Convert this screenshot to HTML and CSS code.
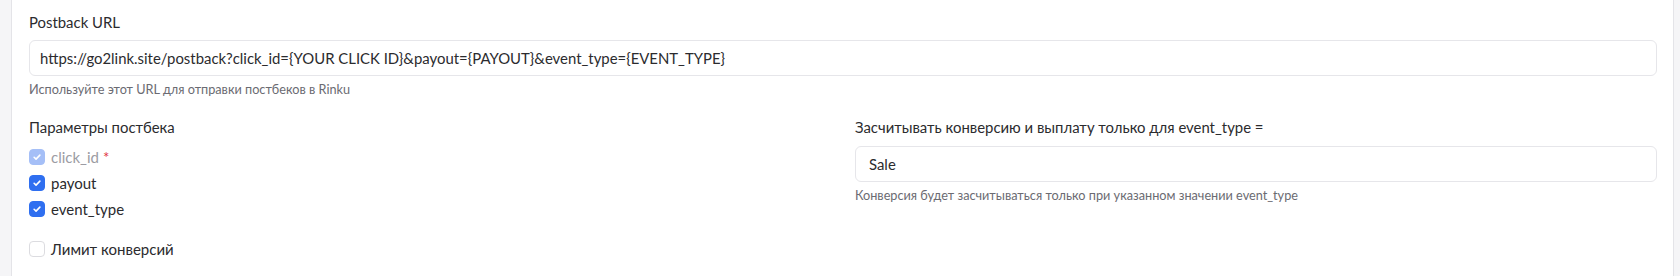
FILE: index.html
```html
<!DOCTYPE html>
<html lang="ru">
<head>
<meta charset="utf-8">
<link rel="stylesheet" href="styles.css">
</head>
<body>
<div class="page">
  <div class="card">
    <div class="field">
      <label class="label">Postback URL</label>
      <div class="input">https://go2link.site/postback?click_id={YOUR CLICK ID}&amp;payout={PAYOUT}&amp;event_type={EVENT_TYPE}</div>
      <div class="help">Используйте этот URL для отправки постбеков в Rinku</div>
    </div>
    <div class="cols">
      <div class="col">
        <div class="label">Параметры постбека</div>
        <div class="checks">
          <div class="check disabled"><span class="box on"><svg viewBox="0 0 16 16"><path d="M4.7 8.3l2.2 2.1 4.4-4.5" /></svg></span><span class="ctext">click_id</span><span class="req">*</span></div>
          <div class="check"><span class="box on"><svg viewBox="0 0 16 16"><path d="M4.7 8.3l2.2 2.1 4.4-4.5" /></svg></span><span class="ctext">payout</span></div>
          <div class="check"><span class="box on"><svg viewBox="0 0 16 16"><path d="M4.7 8.3l2.2 2.1 4.4-4.5" /></svg></span><span class="ctext">event_type</span></div>
        </div>
        <div class="check limit"><span class="box"></span><span class="ctext">Лимит конверсий</span></div>
      </div>
      <div class="col">
        <div class="label">Засчитывать конверсию и выплату только для event_type =</div>
        <div class="input">Sale</div>
        <div class="help">Конверсия будет засчитываться только при указанном значении event_type</div>
      </div>
    </div>
  </div>
</div>
</body>
</html>
```
FILE: styles.css
```css
html, body {
  margin: 0;
  padding: 0;
  background: #f5f5f7;
}
body {
  font-family: Lato, "Open Sans", sans-serif;
  color: #2b2b2e;
  width: 1680px;
  height: 276px;
  overflow: hidden;
}
.page {
  padding: 0 6px 0 11px;
  height: 276px;
}
.card {
  background: #fff;
  border-left: 1px solid #e4e4e8;
  border-right: 1px solid #e4e4e8;
  height: 276px;
  box-sizing: border-box;
  padding: 13px 16px 0 17px;
}
.label {
  display: block;
  font-size: 14.9px;
  line-height: 19px;
  color: #2b2b2e;
}
.field .input {
  margin-top: 8px;
}
.input {
  height: 36px;
  box-sizing: border-box;
  border: 1px solid #e6e6ea;
  border-radius: 6px;
  padding: 0 10px;
  font-size: 14.9px;
  line-height: 34px;
  color: #2b2b2e;
  white-space: nowrap;
}
.help {
  font-size: 12.7px;
  color: #6b6b72;
  margin-top: 6px;
  line-height: 15px;
}
.cols {
  display: grid;
  grid-template-columns: 1fr 1fr;
  column-gap: 24px;
  margin-top: 19px;
}
.col .label {
  margin-top: 2px;
}
.col .input {
  margin-top: 9px;
  padding-left: 13px;
}
.checks {
  margin-top: 12px;
  display: flex;
  flex-direction: column;
  gap: 10px;
}
.check {
  display: flex;
  align-items: center;
  gap: 6px;
  font-size: 15px;
  line-height: 16px;
  color: #2b2b2e;
}
.box {
  width: 16px;
  height: 16px;
  box-sizing: border-box;
  border: 1px solid #dcdce0;
  border-radius: 4px;
  background: #fff;
  display: inline-flex;
  align-items: center;
  justify-content: center;
  flex: none;
}
.box.on {
  background: #2f6ff0;
  border-color: #2f6ff0;
}
.box svg {
  width: 14px;
  height: 14px;
  fill: none;
  stroke: #fff;
  stroke-width: 1.8;
  stroke-linecap: round;
  stroke-linejoin: round;
}
.check.disabled .box.on {
  background: #a5bff7;
  border-color: #a5bff7;
}
.check.disabled .ctext {
  color: #9c9ca3;
}
.req {
  color: #e0343f;
  margin-left: -2px;
}
.limit {
  margin-top: 24px;
}
```
